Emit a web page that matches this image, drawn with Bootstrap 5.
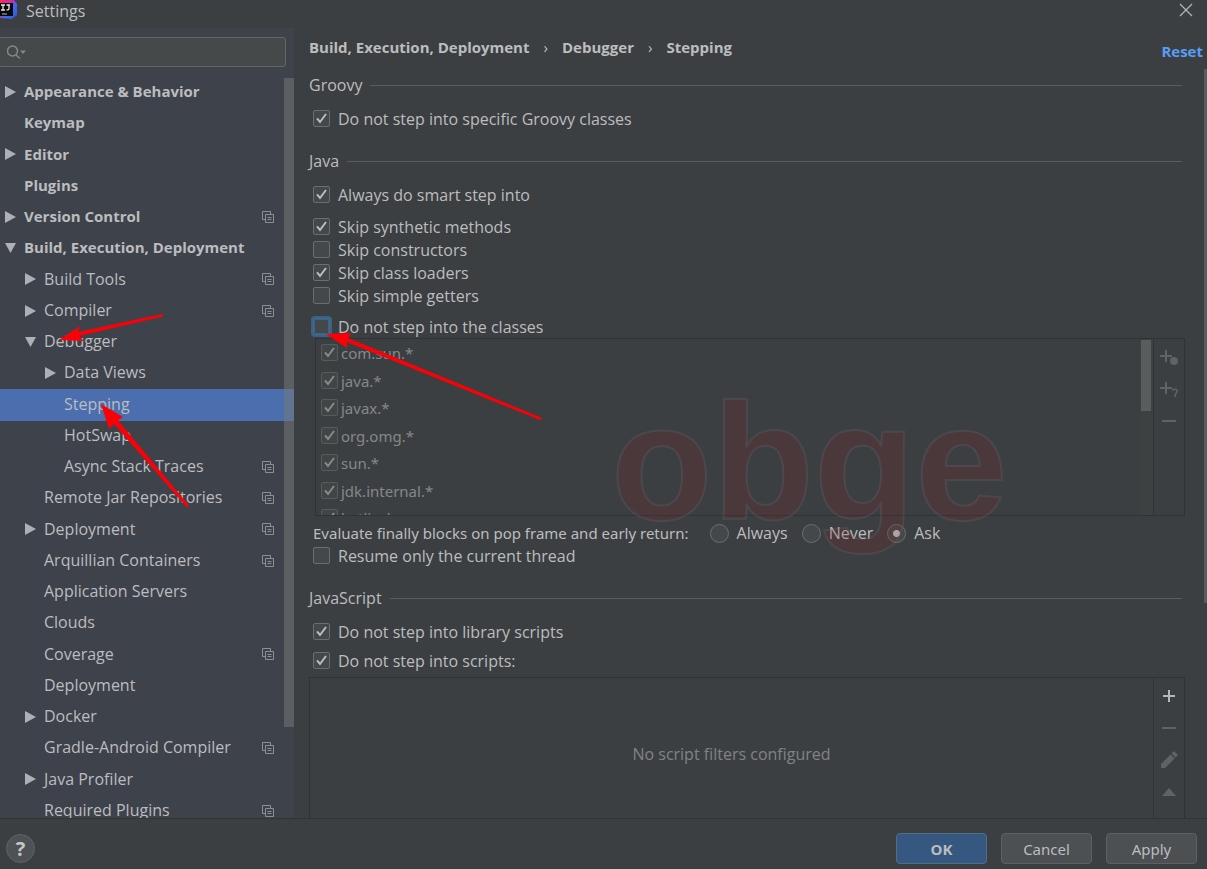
<!DOCTYPE html>
<html lang="en" data-bs-theme="dark">
<head>
<meta charset="utf-8">
<meta name="viewport" content="width=device-width, initial-scale=1">
<title>Settings</title>
<link href="https://cdn.jsdelivr.net/npm/bootstrap@5.3.0/dist/css/bootstrap.min.css" rel="stylesheet">
<style>
  body { font: 15px/23px "Noto Sans", "Open Sans", sans-serif; color: #bbbdbf; background: #3c3f41; }
  .fw-bold { font-family: "Open Sans", sans-serif; }
  .titlebar { height: 28px; line-height: 22px; padding-right: 14px; }
  .titlebar button { color: #b4b6b8; line-height: 0; margin-top: 3px; }
  .titlebar, .tree-row a, .sect h2, .opt label { font-family: "Open Sans", sans-serif; font-size: 16px; }
  .side { width: 294px; background: #3e424b; }
  .search-box { margin: 9px 8px 0 -2px; height: 30px; background: #45494a; border: 1px solid #646769; border-radius: 3px; }
  .search-box input { background: none; border: 0; outline: 0; color: inherit; min-width: 0; }
  .tree-area { margin-top: 10px; }
  .tree-row { height: 31px; padding: 0 20px 2px 0; }
  .tree-row:nth-child(4n+3) { height: 32px; }
  .tree-row a { color: inherit; text-decoration: none; }
  .tree-row.fw-bold a { font-size: 15px; }
  .tree-row .twisty { width: 12px; height: 12px; margin: 0 8px 0 4px; flex: none; fill: #adb1b6; }
  .lvl-1 { padding-left: 20px; }
  .lvl-2 { padding-left: 40px; }
  .tree-row .proj { width: 12px; height: 12px; margin-left: auto; color: #8b9096; }
  .chosen { background: #4b6eaf; }
  .tree-scroll { width: 10px; right: 0; top: 1px; height: 649px; background: rgba(120,123,120,.5); }
  .pane { padding: 0 22px 0 15px; }
  .crumbs { height: 39px; line-height: 39px; margin-bottom: 7px; }
  .crumbs a { color: inherit; text-decoration: none; }
  .crumbs .sep { padding: 0 14px; font-weight: 400; }
  .reset-link { color: #589df6; text-decoration: none; right: 4px; top: 12px; }
  .sect { margin: 0 3px 11px 0; }
  .sect h2 { line-height: 23px; font-weight: 400; margin: 0; color: inherit; }
  .sect hr { border-color: #5a5d5f; opacity: 1; margin: 0 0 0 8px; }
  .sect-next { margin-top: 19px; }
  .opt { height: 23px; padding-left: 4px; }
  .opt label { white-space: nowrap; }
  .opt-apart { margin-bottom: 6px; }
  .opt-far { margin-bottom: 9px; }
  .opt .form-check-input, .class-list .form-check-input { width: 17px; height: 17px; margin: 0 8px 2px 0; flex: none; background-color: #43494a; border: 1px solid #6b6e70; border-radius: 2px; box-shadow: none; opacity: 1; }
  .form-check-input[type=checkbox]:checked { background-size: 15px 15px; background-image: url("data:image/svg+xml,%3Csvg xmlns='http://www.w3.org/2000/svg' viewBox='0 0 15 15'%3E%3Cpath d='M3 7.4L6 11L12 3' fill='none' stroke='%23bbbdbf' stroke-width='2'/%3E%3C/svg%3E"); }
  .opt .form-check-input[type=radio] { width: 19px; height: 19px; border-radius: 50%; margin-bottom: 0; }
  .form-check-input[type=radio]:checked { background-image: radial-gradient(circle, #bbbdbf 3px, transparent 4px) !important; }
  .radio-gap { margin-right: 14px; }
  .opt .has-focus { border: 1px solid #43698e; box-shadow: 0 0 0 2px #3d6185, inset 0 0 0 1px #3d6185; }
  .frame { border: 1px solid #303335; }
  .classes-frame { height: 178px; margin: -1px 0 6px 6px; }
  .class-list { padding: 1px 0 0 5px; overflow: hidden; color: #85888a; }
  .class-list li { height: 27px; }
  .class-list li:nth-child(even) { height: 28px; }
  .class-list .form-check-input { margin-right: 3px; }
  .class-list .form-check-input:disabled { filter: none; opacity: .6; }
  .class-list .form-check-label { opacity: 1 !important; }
  .list-track { width: 13px; background: #3e4142; }
  .list-thumb { width: 10px; height: 71px; margin: 1px; background: #5a5d5e; }
  .tools { width: 31px; border-left: 1px solid #323537; padding-top: 2px; }
  .tools button { height: 32px; color: #b5b7b9; line-height: 0; }
  .tools button:disabled { color: #606365; opacity: 1; }
  .empty-note { font-size: 16px; color: #808385; padding-top: 12px; font-family: "Open Sans", sans-serif; }
  .page-scroll { width: 3px; right: 0; top: 41px; height: 534px; background: #595c5d; }
  .watermark { left: 611px; top: 368px; font: bold 166px/188px "Liberation Sans", sans-serif; color: rgba(140,30,35,.18); -webkit-text-stroke: 2px rgba(115,112,130,.22); pointer-events: none; }
  .arrows { left: 0; top: 0; pointer-events: none; }
  .bottom-bar { border-top: 1px solid #313436; height: 51px; padding: 9px 10px 0 6px; }
  .help-btn { width: 29px; height: 29px; border-radius: 50%; background: #4e5254; border: 1px solid #606365; color: #c4c6c8; font-size: 20px; line-height: 26px; }
  .dlg-row { gap: 14px; }
  .dlg-btn { width: 91px; height: 31px; padding: 0; font-size: 15px; line-height: 31px; border-radius: 4px; color: #bbbdbf; background: #4c5052; border: 1px solid #5e6162; }
  .dlg-btn.main-btn { background: #365880; border-color: #4c708c; }
</style>
</head>
<body>
<svg class="d-none" aria-hidden="true">
  <symbol id="closed" viewBox="0 0 12 12"><path d="M1 0L12 6L1 12Z"/></symbol>
  <symbol id="opened" viewBox="0 0 12 12"><path d="M1 1H12L6.500 11Z"/></symbol>
  <symbol id="proj" viewBox="0 0 12 12"><path d="M3 8.500H.5V.5H8.500V3M3.500 3.500H11.500V11.500H3.500ZM5.500 6.500H9.500M5.500 8.500H9.500" fill="none" stroke="currentColor"/></symbol>
</svg>
<div class="vh-100 d-flex flex-column overflow-hidden position-relative">
  <header class="titlebar d-flex align-items-start flex-shrink-0">
    <svg width="18" height="20" viewBox="0 0 18 20" class="me-2 flex-shrink-0" aria-hidden="true">
      <defs><linearGradient id="lg" x1="0" y1="0" x2="1" y2="1"><stop offset="0" stop-color="#fe2857"/><stop offset=".4" stop-color="#c42bb0"/><stop offset=".6" stop-color="#3b6cf0"/><stop offset="1" stop-color="#2b54d8"/></linearGradient></defs>
      <path d="M0 0H14L17 4V15L12 19L0 18Z" fill="url(#lg)"/><path d="M0 3H13V16H0Z" fill="#090909"/>
      <path d="M1 5H5M3 5V10M1 10H5M6.500 5H10M9 5V8.500Q9 10 6.500 9.800" fill="none" stroke="#e8e8e8" stroke-width="1.300"/><path d="M2 14H7" stroke="#bbb"/>
    </svg>
    <span class="flex-grow-1">Settings</span>
    <button type="button" class="btn p-0 border-0" aria-label="Close"><svg width="14" height="14" viewBox="0 0 14 14"><path d="M1 1L13 13M13 1L1 13" stroke="currentColor" stroke-width="1.200"/></svg></button>
  </header>

  <div class="d-flex flex-grow-1 overflow-hidden">
    <nav class="side d-flex flex-column flex-shrink-0 overflow-hidden" aria-label="Settings categories">
      <div class="search-box d-flex align-items-center flex-shrink-0 px-2">
        <svg width="22" height="16" viewBox="0 0 22 16" fill="none" stroke="#85888a" stroke-width="1.500" aria-hidden="true"><circle cx="5.500" cy="7" r="5"/><path d="M9 11L13 14.500"/><path d="M13 6.500H19L16 10Z" fill="#85888a" stroke="none"/></svg>
        <input type="text" class="flex-grow-1" aria-label="Search settings">
      </div>
      <div class="tree-area position-relative flex-grow-1 overflow-hidden">
        <ul class="list-unstyled mb-0" id="tree"></ul>
        <div class="tree-scroll position-absolute"></div>
      </div>
    </nav>

    <main class="pane flex-grow-1 d-flex flex-column position-relative overflow-hidden">
      <ol class="crumbs list-unstyled d-flex fw-bold flex-shrink-0">
        <li><a href="#">Build, Execution, Deployment</a></li><li class="sep" aria-hidden="true">›</li>
        <li><a href="#">Debugger</a></li><li class="sep" aria-hidden="true">›</li>
        <li aria-current="page">Stepping</li>
      </ol>
      <a href="#" class="reset-link fw-bold position-absolute">Reset</a>

      <div class="sect d-flex align-items-center"><h2>Groovy</h2><hr class="flex-grow-1"></div>
      <div class="opt d-flex align-items-center"><input class="form-check-input" type="checkbox" id="c1" checked><label for="c1">Do not step into specific Groovy classes</label></div>

      <div class="sect sect-next d-flex align-items-center"><h2>Java</h2><hr class="flex-grow-1"></div>
      <div class="opt opt-far d-flex align-items-center"><input class="form-check-input" type="checkbox" id="c2" checked><label for="c2">Always do smart step into</label></div>
      <div class="opt d-flex align-items-center"><input class="form-check-input" type="checkbox" id="c3" checked><label for="c3">Skip synthetic methods</label></div>
      <div class="opt d-flex align-items-center"><input class="form-check-input" type="checkbox" id="c4"><label for="c4">Skip constructors</label></div>
      <div class="opt d-flex align-items-center"><input class="form-check-input" type="checkbox" id="c5" checked><label for="c5">Skip class loaders</label></div>
      <div class="opt mb-2 d-flex align-items-center"><input class="form-check-input" type="checkbox" id="c6"><label for="c6">Skip simple getters</label></div>
      <div class="opt d-flex align-items-center"><input class="form-check-input has-focus" type="checkbox" id="c7"><label for="c7">Do not step into the classes</label></div>

      <div class="frame classes-frame d-flex flex-shrink-0">
        <ul class="class-list list-unstyled flex-grow-1 mb-0" id="classes"></ul>
        <div class="list-track"><div class="list-thumb"></div></div>
        <div class="tools d-flex flex-column">
          <button type="button" class="btn p-0 border-0" disabled aria-label="Add class"><svg width="20" height="18" viewBox="0 0 20 18"><path d="M1 8H13M7 2V14" stroke="currentColor" stroke-width="2"/><circle cx="15" cy="13" r="4" fill="currentColor"/></svg></button>
          <button type="button" class="btn p-0 border-0" disabled aria-label="Add pattern"><svg width="20" height="18" viewBox="0 0 20 18" fill="none" stroke="currentColor"><path d="M1 8H13M7 2V14" stroke-width="2"/><path d="M13 10Q18 8 18 11Q18 12.500 16 15V17" stroke-width="1.600"/></svg></button>
          <button type="button" class="btn p-0 border-0" disabled aria-label="Remove"><svg width="14" height="14" viewBox="0 0 14 14"><path d="M0 7H14" stroke="currentColor" stroke-width="2"/></svg></button>
        </div>
      </div>

      <div class="opt d-flex align-items-center" role="radiogroup" aria-labelledby="finText">
        <span class="text-nowrap" id="finText" style="margin-right:21px">Evaluate finally blocks on pop frame and early return:</span>
        <input class="form-check-input" type="radio" name="fin" id="r1"><label for="r1" class="radio-gap">Always</label>
        <input class="form-check-input" type="radio" name="fin" id="r2"><label for="r2" class="radio-gap">Never</label>
        <input class="form-check-input" type="radio" name="fin" id="r3" checked><label for="r3">Ask</label>
      </div>
      <div class="opt d-flex align-items-center"><input class="form-check-input" type="checkbox" id="c8"><label for="c8">Resume only the current thread</label></div>

      <div class="sect sect-next d-flex align-items-center"><h2>JavaScript</h2><hr class="flex-grow-1"></div>
      <div class="opt opt-apart d-flex align-items-center"><input class="form-check-input" type="checkbox" id="c9" checked><label for="c9">Do not step into library scripts</label></div>
      <div class="opt mb-1 d-flex align-items-center"><input class="form-check-input" type="checkbox" id="c10" checked><label for="c10">Do not step into scripts:</label></div>
      <div class="frame border-bottom-0 d-flex flex-grow-1">
        <div class="empty-note flex-grow-1 d-flex align-items-center justify-content-center">No script filters configured</div>
        <div class="tools d-flex flex-column">
          <button type="button" class="btn p-0 border-0" aria-label="Add"><svg width="14" height="14" viewBox="0 0 14 14"><path d="M1 7H13M7 1V13" stroke="currentColor" stroke-width="2"/></svg></button>
          <button type="button" class="btn p-0 border-0" disabled aria-label="Remove"><svg width="14" height="14" viewBox="0 0 14 14"><path d="M0 7H14" stroke="currentColor" stroke-width="2"/></svg></button>
          <button type="button" class="btn p-0 border-0" disabled aria-label="Edit"><svg width="18" height="18" viewBox="0 0 18 18" fill="currentColor"><path d="M1 17V13L10.500 3.500L14.500 7.500L5 17ZM11.500 2.500L13.500 .5Q14 0 14.500 .5L17.500 3.500Q18 4 17.500 4.500L15.500 6.500Z"/></svg></button>
          <button type="button" class="btn p-0 border-0" disabled aria-label="Move up"><svg width="14" height="8" viewBox="0 0 14 8" fill="currentColor"><path d="M0 8L7 0L14 8Z"/></svg></button>
        </div>
      </div>
      <div class="page-scroll position-absolute"></div>
    </main>
  </div>

  <footer class="bottom-bar d-flex align-items-center flex-shrink-0">
    <button type="button" class="help-btn p-0 fw-bold me-auto" aria-label="Help">?</button>
    <div class="dlg-row d-flex">
      <button type="button" class="btn dlg-btn main-btn fw-bold">OK</button>
      <button type="button" class="btn dlg-btn">Cancel</button>
      <button type="button" class="btn dlg-btn">Apply</button>
    </div>
  </footer>

  <div class="watermark position-absolute" aria-hidden="true">obge</div>
  <svg class="arrows position-absolute" width="560" height="520" viewBox="0 0 560 520" fill="#fb0007" aria-hidden="true">
    <path d="M59 340L80 326L78 332L162 314Q164 315 163 316.500L79 336L84 341Z"/>
    <path d="M101 404L123 417L118 420.500L189 505.500Q189 508 186.500 507L114 424L109 429Z"/>
    <path d="M326 334L351 333L348 338L541 417.500Q543 419.500 540 420L347 342L347 348Z"/>
  </svg>
</div>
<script src="https://cdn.jsdelivr.net/npm/bootstrap@5.3.0/dist/js/bootstrap.bundle.min.js"></script>
<script>
  // name, depth, arrow (c closed, o open), project-level mark
  const rows = [
    ['Appearance & Behavior', 0, 'c'], ['Keymap', 0], ['Editor', 0, 'c'], ['Plugins', 0],
    ['Version Control', 0, 'c', 1], ['Build, Execution, Deployment', 0, 'o'],
    ['Build Tools', 1, 'c', 1], ['Compiler', 1, 'c', 1], ['Debugger', 1, 'o'],
    ['Data Views', 2, 'c'], ['Stepping', 2], ['HotSwap', 2], ['Async Stack Traces', 2, '', 1],
    ['Remote Jar Repositories', 1, '', 1], ['Deployment', 1, 'c', 1], ['Arquillian Containers', 1, '', 1],
    ['Application Servers', 1], ['Clouds', 1], ['Coverage', 1, '', 1], ['Deployment', 1],
    ['Docker', 1, 'c'], ['Gradle-Android Compiler', 1, '', 1], ['Java Profiler', 1, 'c'], ['Required Plugins', 1, '', 1]
  ];
  document.getElementById('tree').innerHTML = rows.map(([name, depth, arrow, mark]) =>
    `<li class="tree-row d-flex align-items-center lvl-${depth} ${depth ? '' : 'fw-bold'} ${name === 'Stepping' ? 'chosen' : ''}">
      <svg class="twisty">${arrow ? `<use href="#${arrow === 'c' ? 'closed' : 'opened'}"/>` : ''}</svg>
      <a href="#" class="text-nowrap">${name.replace('&', '&amp;')}</a>${mark ? '<svg class="proj"><use href="#proj"/></svg>' : ''}</li>`).join('');
  document.getElementById('classes').innerHTML = ['com.sun.*', 'java.*', 'javax.*', 'org.omg.*', 'sun.*', 'jdk.internal.*', 'kotlin.*'].map((n, i) =>
    `<li class="d-flex align-items-center"><input class="form-check-input" type="checkbox" id="k${i}" checked disabled><label class="form-check-label" for="k${i}">${n}</label></li>`).join('');
</script>
</body>
</html>
